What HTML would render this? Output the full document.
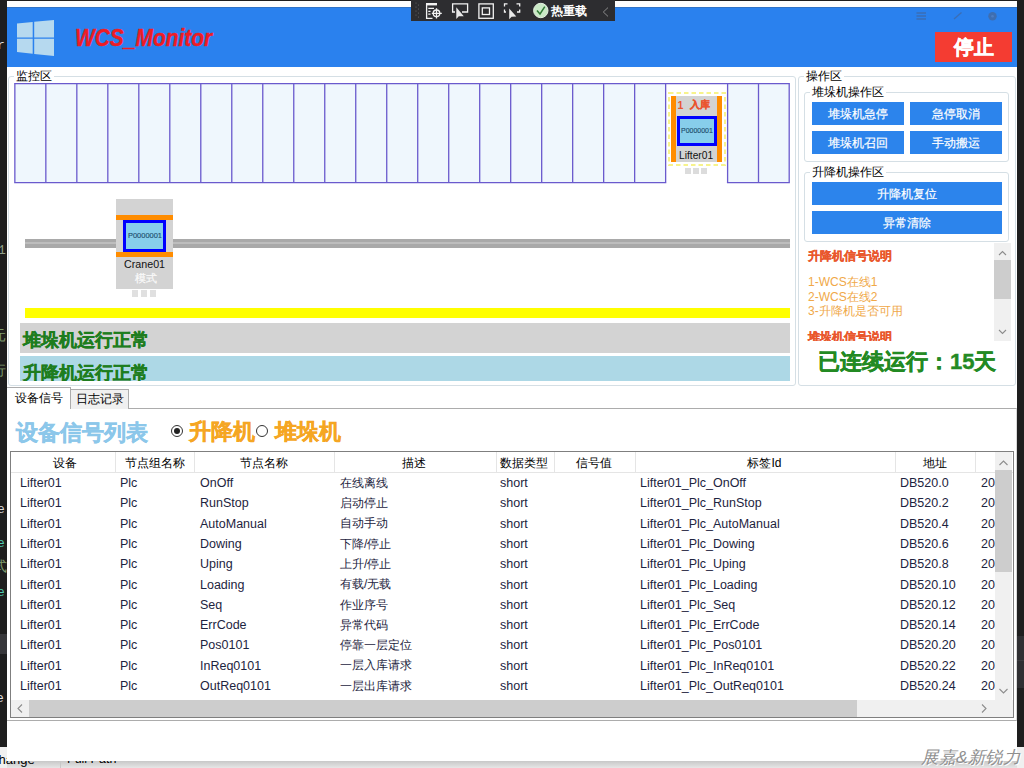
<!DOCTYPE html>
<html><head><meta charset="utf-8">
<style>
*{margin:0;padding:0;box-sizing:border-box}
html,body{width:1024px;height:768px;overflow:hidden;background:#1e1e1e;font-family:"Liberation Sans",sans-serif;position:relative}
.a{position:absolute}
.t{position:absolute;white-space:nowrap;line-height:1}
#win{left:7px;top:1px;width:1010px;height:760px;background:#fff}
#hdr{left:7px;top:7px;width:1010px;height:59.6px;background:#2a81ee;border-top:1px solid #2f72c6}
#tb{left:411px;top:0;width:204px;height:21px;background:#2d2d30}
.gb{position:absolute;border:1px solid #d5dfe5;border-radius:3px}
.gl{position:absolute;background:#fff;font-size:12px;color:#000;line-height:1;padding:0 2px}
.cell{position:absolute;top:83px;height:100px;width:32px;border:1px solid #7b70e8;background:#eef6fc}
.btn{position:absolute;background:#2c84ec;color:#fff;font-size:12px;-webkit-text-stroke:0.2px #fff;text-align:center;line-height:25px;height:23px}
.row{position:absolute;left:0;height:20px;font-size:12.5px;color:#1d2440;white-space:nowrap}
.row span{position:absolute;top:3px;line-height:1}
.sk{-webkit-text-stroke:0.4px currentColor}
.hd{position:absolute;top:0;font-size:12px;color:#000;line-height:1}
</style></head><body>
<div class="a" style="left:0;top:0;width:7px;height:747px;overflow:hidden;font-family:'Liberation Mono',monospace;font-size:13px">
<div class="t" style="left:-3px;top:39px;color:#dcdcdc">r</div>
<div class="t" style="left:-2px;top:244px;color:#8fa08a">1</div>
<div class="t" style="left:-8px;top:329px;font-size:14px;color:#7d9a6d">元</div>
<div class="t" style="left:-8px;top:364px;font-size:14px;color:#7d9a6d">行</div>
<div class="t" style="left:-3px;top:503px;color:#dcdcdc">e</div>
<div class="t" style="left:-3px;top:537px;color:#4ec9b0">e</div>
<div class="t" style="left:-7px;top:560px;font-size:14px;color:#7d9a6d">式</div>
<div class="t" style="left:-3px;top:586px;color:#4ec9b0">e</div>
<div class="a" style="left:0;top:634px;width:7px;height:20px;background:#37373a"></div>
<div class="t" style="left:-4px;top:692px;color:#e0e0e0">e</div>
</div>
<div class="a" style="left:1017px;top:636px;width:7px;height:52px;background:#2f2f32"></div>
<div class="a" style="left:1017px;top:660px;width:7px;height:1px;background:#3c3c3f"></div>
<!-- bottom strip -->
<div class="a" style="left:0;top:747px;width:1024px;height:21px;background:#f0f0f0"></div>
<div class="a" style="left:7px;top:761px;width:1010px;height:7px;background:linear-gradient(#c8c8c8,#e6e6e6)"></div>
<div class="t" style="left:-1.5px;top:753px;font-size:13px;color:#000">hange</div>
<div class="a" style="left:60px;top:747px;width:1px;height:21px;background:#c8c8c8"></div>
<div class="t" style="left:67px;top:753px;font-size:12.5px;color:#000">Full Path</div>
<div class="a" id="win"></div>
<div class="a" id="hdr"></div>
<div class="a" style="left:7px;top:1px;width:1010px;height:6px;background:#fdfdfd"></div>

<!-- windows logo -->
<svg class="a" style="left:0;top:0" width="60" height="60" viewBox="0 0 60 60">
<polygon points="17,23.4 32.7,21.9 32.7,37.5 17,37.5" fill="#b6d9ef"/>
<polygon points="34.2,21.8 54,20 54,37.5 34.2,37.5" fill="#b6d9ef"/>
<polygon points="17,38.7 32.7,38.7 32.7,53.7 17,52" fill="#b6d9ef"/>
<polygon points="34.2,38.7 54,38.7 54,56 34.2,53.9" fill="#b6d9ef"/>
</svg>
<div class="t" style="left:75px;top:26.5px;font-size:23px;font-weight:bold;font-style:italic;color:#ee1c25;-webkit-text-stroke:0.4px #ee1c25;transform-origin:0 0;transform:scaleX(0.91)">WCS_Monitor</div>

<!-- header right icons -->
<svg class="a" style="left:910px;top:8px;opacity:.55" width="95" height="18" viewBox="910 8 95 18">
<g stroke="#4a5f86" stroke-width="1.3" fill="none">
<path d="M916.5 13 H926 M916.5 16 H926 M916.5 19 H926"/>
<path d="M954 19 L961.5 12.5"/>
</g>
<circle cx="992.5" cy="16.3" r="4.2" fill="#4f5f80"/>
<circle cx="992.5" cy="16.3" r="1.3" fill="#6a7aa0"/>
</svg>
<!-- stop button -->
<div class="a" style="left:935px;top:32px;width:77px;height:30px;background:#f43c32"></div>
<div class="t sk" style="left:954px;top:37px;font-size:20px;font-weight:bold;color:#fff">停止</div>

<!-- debug toolbar -->
<div class="a" id="tb"></div>
<svg class="a" style="left:411px;top:0" width="204" height="21" viewBox="411 0 204 21">
<g fill="#6b6b6b"><circle cx="416" cy="3" r=".6"/><circle cx="418.5" cy="5" r=".6"/><circle cx="416" cy="7" r=".6"/><circle cx="418.5" cy="9" r=".6"/><circle cx="416" cy="11" r=".6"/><circle cx="418.5" cy="13" r=".6"/><circle cx="416" cy="15" r=".6"/><circle cx="418.5" cy="17" r=".6"/></g>
<g stroke="#f2f2f2" fill="none" stroke-width="1.3">
<path d="M426.6 4.5 H437 M426.6 3.5 V18.4 H432.5"/>
<rect x="426" y="3" width="11" height="2.2" fill="#f2f2f2" stroke="none"/>
<path d="M428.3 8.4 H434 M428.3 11.4 H430.5 M428.3 14.2 H430.5"/>
<circle cx="436.5" cy="13.3" r="3.3"/>
<path d="M436.5 8.3 V18.6 M431.8 13.3 H441.8"/>
<path d="M455 12 H452.6 V3.9 H467.6 V12 H462"/>
<rect x="478.9" y="3.9" width="14.4" height="14.4"/>
<rect x="482.3" y="7.9" width="7.2" height="6.6"/>
<path d="M504.5 6.5 V3.9 H507.5 M516.5 3.9 H519.7 V6.5 M519.7 9.5 V12 H517 M504.5 9.5 V12 H506"/>
<path d="M603 5.5 L608 5.5" stroke="none"/>
</g>
<path d="M456.3 7.3 V19 L458.8 16.3 L463.8 16.3 Z" fill="#e8e8e8"/>
<path d="M509.2 8.6 V19.3 L511.6 16.8 L516.3 16.6 Z" fill="#e8e8e8"/>
<circle cx="540.8" cy="10.5" r="7.2" fill="#c9e9c6" stroke="#e6f2e3" stroke-width="1"/>
<path d="M537 10.5 L540 14 L544.8 6.6" stroke="#2f7a35" stroke-width="1.5" fill="none"/>
<path d="M608 7.6 L603.3 12 L608 16.4" stroke="#8a8a8a" stroke-width="1" fill="none"/>
</svg>
<div class="t" style="left:550.5px;top:4.5px;font-size:12px;color:#fff;font-weight:bold;transform-origin:0 0;transform:scaleX(1.0)">热重载</div>

<!-- monitor group -->
<div class="gb" style="left:8px;top:76px;width:788px;height:310px"></div>
<div class="gl" style="left:14px;top:70px">监控区</div>

<svg class="a" style="left:0;top:0" width="800" height="200">
<rect x="14.85" y="83.6" width="650.79" height="99.00" fill="#eff7fd"/>
<rect x="727.6" y="83.6" width="61.60" height="99.00" fill="#eff7fd"/>
<path d="M14.85 83.6V182.6M45.84 83.6V182.6M76.83 83.6V182.6M107.82 83.6V182.6M138.81 83.6V182.6M169.80 83.6V182.6M200.79 83.6V182.6M231.78 83.6V182.6M262.77 83.6V182.6M293.76 83.6V182.6M324.75 83.6V182.6M355.74 83.6V182.6M386.73 83.6V182.6M417.72 83.6V182.6M448.71 83.6V182.6M479.70 83.6V182.6M510.69 83.6V182.6M541.68 83.6V182.6M572.67 83.6V182.6M603.66 83.6V182.6M634.65 83.6V182.6M665.64 83.6V182.6M727.60 83.6V182.6M758.50 83.6V182.6M789.20 83.6V182.6M14.15 83.6H789.90M14.15 182.6H666.34M726.90 182.6H789.90" stroke="#6a5acd" stroke-width="1.3" fill="none"/>
</svg>
<!-- lifter -->
<svg class="a" style="left:666px;top:90px" width="62" height="78"><rect x="3" y="3" width="56" height="72" fill="none" stroke="#f7f38c" stroke-width="2" stroke-dasharray="4.5 3"/></svg>
<div class="a" style="left:671px;top:96px;width:51px;height:66px;background:#d3d3d3;border-left:5px solid #ff8c00;border-right:5px solid #ff8c00"></div>
<div class="t" style="left:677.5px;top:99.5px;font-size:10.5px;font-weight:bold;color:#ea5530">1</div><div class="t sk" style="left:690px;top:99.5px;font-size:9.8px;font-weight:bold;color:#ea5530">入库</div>
<div class="a" style="left:676.5px;top:116px;width:40px;height:30px;background:#87ceeb;border:3px solid #0000ff"></div>
<div class="t" style="left:680.5px;top:127px;font-size:7.5px;color:#1e4f6e;-webkit-text-stroke:0.15px #1e4f6e;transform-origin:0 0;transform:scaleX(0.93)">P0000001</div>
<div class="t" style="left:679px;top:150px;font-size:11px;color:#111;transform-origin:0 0;transform:scaleX(0.93)">Lifter01</div>
<div class="a" style="left:685px;top:168px;width:6px;height:6px;background:#dcdcdc"></div>
<div class="a" style="left:693px;top:168px;width:6px;height:6px;background:#dcdcdc"></div>
<div class="a" style="left:701px;top:168px;width:6px;height:6px;background:#dcdcdc"></div>

<!-- rail -->
<div class="a" style="left:25px;top:239px;width:765px;height:9px;background:#a9a9a9"></div>
<div class="a" style="left:25px;top:242px;width:765px;height:2px;background:#bdbdbd"></div>
<!-- crane -->
<div class="a" style="left:116px;top:199px;width:57px;height:90px;background:#d3d3d3"></div>
<div class="a" style="left:116px;top:215px;width:57px;height:5px;background:#ff8c00"></div>
<div class="a" style="left:116px;top:252px;width:57px;height:5px;background:#ff8c00"></div>
<div class="a" style="left:123px;top:220px;width:43px;height:32px;background:#87ceeb;border:3px solid #0000ff"></div>
<div class="t" style="left:127.5px;top:231.5px;font-size:8px;color:#1e4f6e;-webkit-text-stroke:0.15px #1e4f6e;transform-origin:0 0;transform:scaleX(0.93)">P0000001</div>
<div class="t" style="left:124px;top:259px;font-size:11.5px;color:#111;transform-origin:0 0;transform:scaleX(0.93)">Crane01</div>
<div class="t" style="left:135px;top:273px;font-size:10.5px;color:#f8f8f8;-webkit-text-stroke:0.2px #fff">模式</div>
<div class="a" style="left:132px;top:290px;width:6px;height:7px;background:#e0e0e0"></div>
<div class="a" style="left:141px;top:290px;width:6px;height:7px;background:#e0e0e0"></div>
<div class="a" style="left:150px;top:290px;width:6px;height:7px;background:#e0e0e0"></div>

<!-- yellow + status -->
<div class="a" style="left:25px;top:308px;width:765px;height:10px;background:#ffff00"></div>
<div class="a" style="left:20px;top:323px;width:770px;height:30px;background:#d3d3d3"></div>
<div class="t sk" style="left:23px;top:330.5px;font-size:18px;font-weight:bold;color:#1e7d1e">堆垛机运行正常</div>
<div class="a" style="left:20px;top:356px;width:770px;height:25px;background:#add8e6;overflow:hidden">
<div class="t sk" style="left:3px;top:7.5px;font-size:18px;font-weight:bold;color:#1e7d1e">升降机运行正常</div></div>

<!-- op group -->
<div class="gb" style="left:798px;top:76px;width:218px;height:310px"></div>
<div class="gl" style="left:804px;top:70px">操作区</div>
<div class="gb" style="left:804px;top:92px;width:205px;height:70px"></div>
<div class="gl" style="left:810px;top:86px">堆垛机操作区</div>
<div class="btn" style="left:812px;top:102px;width:92px">堆垛机急停</div>
<div class="btn" style="left:910px;top:102px;width:92px">急停取消</div>
<div class="btn" style="left:812px;top:131px;width:92px">堆垛机召回</div>
<div class="btn" style="left:910px;top:131px;width:92px">手动搬运</div>
<div class="gb" style="left:804px;top:172px;width:205px;height:70px"></div>
<div class="gl" style="left:810px;top:166px">升降机操作区</div>
<div class="btn" style="left:812px;top:182px;width:190px">升降机复位</div>
<div class="btn" style="left:812px;top:211px;width:190px">异常清除</div>
<!-- signal desc -->
<div class="a" style="left:804px;top:243px;width:207px;height:98px;overflow:hidden">
<div class="t sk" style="left:4px;top:7px;font-size:12px;font-weight:bold;color:#e9572c;-webkit-text-stroke-width:0.25px">升降机信号说明</div>
<div class="t" style="left:4px;top:33px;font-size:12px;color:#f0a848">1-WCS在线1</div>
<div class="t" style="left:4px;top:48px;font-size:12px;color:#f0a848">2-WCS在线2</div>
<div class="t" style="left:4px;top:62px;font-size:12px;color:#f0a848">3-升降机是否可用</div>
<div class="t sk" style="left:4px;top:88px;font-size:12px;font-weight:bold;color:#e9572c;-webkit-text-stroke-width:0.25px">堆垛机信号说明</div>
</div>
<div class="a" style="left:994px;top:243px;width:17px;height:98px;background:#f0f0f0"></div>
<div class="a" style="left:994px;top:260px;width:17px;height:39px;background:#cdcdcd"></div>
<svg class="a" style="left:994px;top:243px" width="17" height="98"><path d="M5 12 L8.5 8.5 L12 12" stroke="#8c8c8c" stroke-width="1.1" fill="none"/><path d="M5 87 L8.5 90.5 L12 87" stroke="#8c8c8c" stroke-width="1.1" fill="none"/></svg>
<div class="t sk" style="left:818px;top:351px;font-size:22px;font-weight:bold;color:#238a23">已连续运行：15天</div>

<!-- tabs -->
<div class="a" style="left:7px;top:408px;width:1010px;height:313px;border:1px solid #acacac;border-left:none;border-right-color:#d8d8d8"></div>
<div class="a" style="left:70px;top:389px;width:59px;height:20px;background:#f0f0f0;border:1px solid #acacac;border-bottom:none"></div>
<div class="t" style="left:76px;top:393px;font-size:12px;color:#000">日志记录</div>
<div class="a" style="left:7px;top:387px;width:64px;height:22px;background:#fff;border:1px solid #acacac;border-bottom:none;border-left:none"></div>
<div class="t" style="left:15px;top:392px;font-size:12px;color:#000">设备信号</div>
<div class="t sk" style="left:16px;top:422px;font-size:22px;font-weight:bold;color:#8cc7ea">设备信号列表</div>
<div class="a" style="left:171px;top:425px;width:12px;height:12px;border-radius:50%;border:1px solid #333;background:#fff"></div>
<div class="a" style="left:174px;top:428px;width:6px;height:6px;border-radius:50%;background:#222"></div>
<div class="t sk" style="left:189px;top:421px;font-size:22px;font-weight:bold;color:#f5a623">升降机</div>
<div class="a" style="left:256px;top:425px;width:12px;height:12px;border-radius:50%;border:1px solid #333;background:#fff"></div>
<div class="t sk" style="left:275px;top:421px;font-size:22px;font-weight:bold;color:#f5a623">堆垛机</div>
<!-- grid -->
<div class="a" id="grid" style="left:10px;top:451px;width:1004px;height:267px;border:1px solid #7f7f7f;background:#fff;overflow:hidden">
<div class="a" style="left:0;top:0;width:1002px;height:21px;background:#fff;border-bottom:1px solid #e5e5e5"></div>

<div class="a" style="left:103.6px;top:0;width:1px;height:21px;background:#e5e5e5"></div>
<div class="a" style="left:183.4px;top:0;width:1px;height:21px;background:#e5e5e5"></div>
<div class="a" style="left:323.1px;top:0;width:1px;height:21px;background:#e5e5e5"></div>
<div class="a" style="left:484.8px;top:0;width:1px;height:21px;background:#e5e5e5"></div>
<div class="a" style="left:542.9px;top:0;width:1px;height:21px;background:#e5e5e5"></div>
<div class="a" style="left:623.5px;top:0;width:1px;height:21px;background:#e5e5e5"></div>
<div class="a" style="left:884.4px;top:0;width:1px;height:21px;background:#e5e5e5"></div>
<div class="a" style="left:963.7px;top:0;width:1px;height:21px;background:#e5e5e5"></div>
<div class="hd" style="left:-6.2px;width:120px;text-align:center;top:5px">设备</div>
<div class="hd" style="left:83.5px;width:120px;text-align:center;top:5px">节点组名称</div>
<div class="hd" style="left:193.2px;width:120px;text-align:center;top:5px">节点名称</div>
<div class="hd" style="left:342.7px;width:120px;text-align:center;top:5px">描述</div>
<div class="hd" style="left:452.8px;width:120px;text-align:center;top:5px">数据类型</div>
<div class="hd" style="left:522.7px;width:120px;text-align:center;top:5px">信号值</div>
<div class="hd" style="left:693.5px;width:120px;text-align:center;top:5px">标签Id</div>
<div class="hd" style="left:863.5px;width:120px;text-align:center;top:5px">地址</div>
<div class="row" style="top:22.00px"><span style="left:9px">Lifter01</span><span style="left:109px">Plc</span><span style="left:189px">OnOff</span><span style="left:329px;font-size:12px;top:2.8px">在线离线</span><span style="left:489px">short</span><span style="left:629px">Lifter01_Plc_OnOff</span><span style="left:889px">DB520.0</span><span style="left:970px">20</span></div>
<div class="row" style="top:42.30px"><span style="left:9px">Lifter01</span><span style="left:109px">Plc</span><span style="left:189px">RunStop</span><span style="left:329px;font-size:12px;top:2.8px">启动停止</span><span style="left:489px">short</span><span style="left:629px">Lifter01_Plc_RunStop</span><span style="left:889px">DB520.2</span><span style="left:970px">20</span></div>
<div class="row" style="top:62.60px"><span style="left:9px">Lifter01</span><span style="left:109px">Plc</span><span style="left:189px">AutoManual</span><span style="left:329px;font-size:12px;top:2.8px">自动手动</span><span style="left:489px">short</span><span style="left:629px">Lifter01_Plc_AutoManual</span><span style="left:889px">DB520.4</span><span style="left:970px">20</span></div>
<div class="row" style="top:82.90px"><span style="left:9px">Lifter01</span><span style="left:109px">Plc</span><span style="left:189px">Dowing</span><span style="left:329px;font-size:12px;top:2.8px">下降/停止</span><span style="left:489px">short</span><span style="left:629px">Lifter01_Plc_Dowing</span><span style="left:889px">DB520.6</span><span style="left:970px">20</span></div>
<div class="row" style="top:103.20px"><span style="left:9px">Lifter01</span><span style="left:109px">Plc</span><span style="left:189px">Uping</span><span style="left:329px;font-size:12px;top:2.8px">上升/停止</span><span style="left:489px">short</span><span style="left:629px">Lifter01_Plc_Uping</span><span style="left:889px">DB520.8</span><span style="left:970px">20</span></div>
<div class="row" style="top:123.50px"><span style="left:9px">Lifter01</span><span style="left:109px">Plc</span><span style="left:189px">Loading</span><span style="left:329px;font-size:12px;top:2.8px">有载/无载</span><span style="left:489px">short</span><span style="left:629px">Lifter01_Plc_Loading</span><span style="left:889px">DB520.10</span><span style="left:970px">20</span></div>
<div class="row" style="top:143.80px"><span style="left:9px">Lifter01</span><span style="left:109px">Plc</span><span style="left:189px">Seq</span><span style="left:329px;font-size:12px;top:2.8px">作业序号</span><span style="left:489px">short</span><span style="left:629px">Lifter01_Plc_Seq</span><span style="left:889px">DB520.12</span><span style="left:970px">20</span></div>
<div class="row" style="top:164.10px"><span style="left:9px">Lifter01</span><span style="left:109px">Plc</span><span style="left:189px">ErrCode</span><span style="left:329px;font-size:12px;top:2.8px">异常代码</span><span style="left:489px">short</span><span style="left:629px">Lifter01_Plc_ErrCode</span><span style="left:889px">DB520.14</span><span style="left:970px">20</span></div>
<div class="row" style="top:184.40px"><span style="left:9px">Lifter01</span><span style="left:109px">Plc</span><span style="left:189px">Pos0101</span><span style="left:329px;font-size:12px;top:2.8px">停靠一层定位</span><span style="left:489px">short</span><span style="left:629px">Lifter01_Plc_Pos0101</span><span style="left:889px">DB520.20</span><span style="left:970px">20</span></div>
<div class="row" style="top:204.70px"><span style="left:9px">Lifter01</span><span style="left:109px">Plc</span><span style="left:189px">InReq0101</span><span style="left:329px;font-size:12px;top:2.8px">一层入库请求</span><span style="left:489px">short</span><span style="left:629px">Lifter01_Plc_InReq0101</span><span style="left:889px">DB520.22</span><span style="left:970px">20</span></div>
<div class="row" style="top:225.00px"><span style="left:9px">Lifter01</span><span style="left:109px">Plc</span><span style="left:189px">OutReq0101</span><span style="left:329px;font-size:12px;top:2.8px">一层出库请求</span><span style="left:489px">short</span><span style="left:629px">Lifter01_Plc_OutReq0101</span><span style="left:889px">DB520.24</span><span style="left:970px">20</span></div>
<!-- vscroll -->
<div class="a" style="left:984px;top:0;width:17px;height:248px;background:#f0f0f0"></div>
<div class="a" style="left:984px;top:18px;width:17px;height:102px;background:#cdcdcd"></div>
<svg class="a" style="left:984px;top:0" width="17" height="248"><path d="M4.5 13 L8.5 9 L12.5 13" stroke="#8c8c8c" stroke-width="1.1" fill="none"/><path d="M4.5 237 L8.5 241 L12.5 237" stroke="#8c8c8c" stroke-width="1.1" fill="none"/></svg>
<!-- hscroll -->
<div class="a" style="left:0;top:248px;width:984px;height:17px;background:#f0f0f0"></div>
<div class="a" style="left:18px;top:248px;width:828px;height:17px;background:#cdcdcd"></div>
<div class="a" style="left:984px;top:248px;width:18px;height:17px;background:#f0f0f0"></div>
<svg class="a" style="left:0;top:248px" width="984" height="17"><path d="M11 4.5 L7 8.5 L11 12.5" stroke="#8c8c8c" stroke-width="1.1" fill="none"/><path d="M971 4.5 L975 8.5 L971 12.5" stroke="#8c8c8c" stroke-width="1.1" fill="none"/></svg>
</div>
<div class="t" style="left:921px;top:748.5px;font-size:17px;font-style:italic;color:#8f8f8f;text-shadow:1px 1px 0 #fff;transform-origin:0 0;transform:scaleX(1.03)">展嘉&amp;新锐力</div>
</body></html>
